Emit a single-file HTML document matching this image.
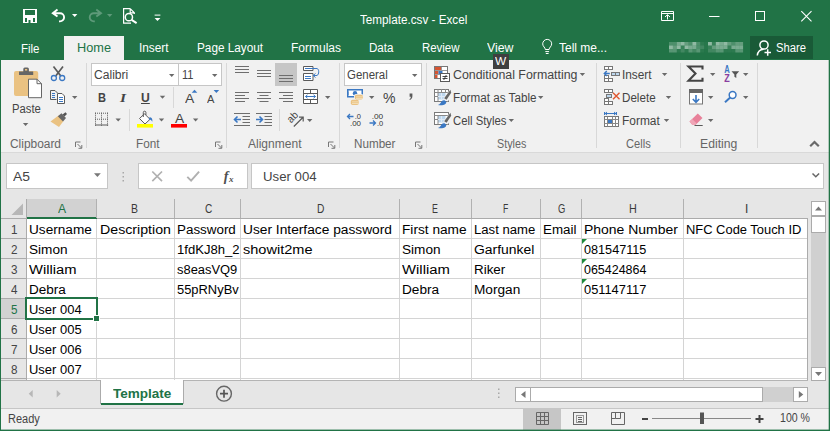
<!DOCTYPE html>
<html><head><meta charset="utf-8"><title>Template.csv - Excel</title>
<style>
html,body{margin:0;padding:0;}
body{width:830px;height:431px;overflow:hidden;position:relative;background:#e6e6e6;font-family:"Liberation Sans",sans-serif;}
.t{position:absolute;white-space:nowrap;transform-origin:0 50%;display:block;}
.b{position:absolute;box-sizing:border-box;}
svg{position:absolute;left:0;top:0;}

.g{background:#217346;}

</style></head><body>
<div class="b" style="left:0px;top:0px;width:830px;height:60px;background:#217346;"></div>
<div class="b" style="left:64px;top:36px;width:60px;height:24px;background:#f1f1f1;"></div>
<div class="b" style="left:750px;top:36px;width:63px;height:23px;background:#195a37;"></div>
<div class="b" style="left:0px;top:60px;width:830px;height:92px;background:#f1f1f1;"></div>
<div class="b" style="left:0px;top:152px;width:830px;height:1px;background:#d9d9d9;"></div>
<div class="b" style="left:86px;top:63px;width:1px;height:85px;background:#d8d8d8;"></div>
<div class="b" style="left:226px;top:63px;width:1px;height:85px;background:#d8d8d8;"></div>
<div class="b" style="left:339px;top:63px;width:1px;height:85px;background:#d8d8d8;"></div>
<div class="b" style="left:426px;top:63px;width:1px;height:85px;background:#d8d8d8;"></div>
<div class="b" style="left:596px;top:63px;width:1px;height:85px;background:#d8d8d8;"></div>
<div class="b" style="left:680px;top:63px;width:1px;height:85px;background:#d8d8d8;"></div>
<div class="b" style="left:757px;top:63px;width:1px;height:85px;background:#d8d8d8;"></div>
<div class="b" style="left:173px;top:87px;width:1px;height:21px;background:#d8d8d8;"></div>
<div class="b" style="left:129px;top:109px;width:1px;height:22px;background:#d8d8d8;"></div>
<div class="b" style="left:279px;top:109px;width:1px;height:22px;background:#d8d8d8;"></div>
<div class="b" style="left:91px;top:63px;width:88px;height:23px;background:#fff;border:1px solid #c6c6c6;"></div>
<div class="b" style="left:178px;top:63px;width:44px;height:23px;background:#fff;border:1px solid #c6c6c6;"></div>
<div class="b" style="left:344px;top:63px;width:78px;height:23px;background:#fff;border:1px solid #c6c6c6;"></div>
<div class="b" style="left:275px;top:63px;width:22px;height:23px;background:#c6c6c6;"></div>
<div class="b" style="left:493px;top:54px;width:16px;height:15px;background:#3f3f3f;"></div>
<div class="b" style="left:6px;top:163px;width:102px;height:26px;background:#fff;border:1px solid #c6c6c6;"></div>
<div class="b" style="left:138px;top:163px;width:110px;height:26px;background:#fff;border:1px solid #c6c6c6;"></div>
<div class="b" style="left:251px;top:163px;width:573px;height:26px;background:#fff;border:1px solid #c6c6c6;"></div>
<div class="b" style="left:27px;top:219px;width:780px;height:161px;background:#fff;"></div>
<div class="b" style="left:27px;top:199px;width:69px;height:18px;background:#d2d2d2;"></div>
<div class="b" style="left:26px;top:217px;width:71px;height:2px;background:#217346;"></div>
<div class="b" style="left:1px;top:299px;width:25px;height:19px;background:#d2d2d2;"></div>
<div class="b" style="left:97px;top:218px;width:711px;height:1px;background:#ababab;"></div>
<div class="b" style="left:1px;top:218px;width:25px;height:1px;background:#ababab;"></div>
<div class="b" style="left:26px;top:199px;width:1px;height:181px;background:#ababab;"></div>
<div class="b" style="left:96px;top:199px;width:1px;height:19px;background:#b1b1b1;"></div>
<div class="b" style="left:96px;top:219px;width:1px;height:161px;background:#d4d4d4;"></div>
<div class="b" style="left:174px;top:199px;width:1px;height:19px;background:#b1b1b1;"></div>
<div class="b" style="left:174px;top:219px;width:1px;height:161px;background:#d4d4d4;"></div>
<div class="b" style="left:240px;top:199px;width:1px;height:19px;background:#b1b1b1;"></div>
<div class="b" style="left:240px;top:219px;width:1px;height:161px;background:#d4d4d4;"></div>
<div class="b" style="left:399px;top:199px;width:1px;height:19px;background:#b1b1b1;"></div>
<div class="b" style="left:399px;top:219px;width:1px;height:161px;background:#d4d4d4;"></div>
<div class="b" style="left:471px;top:199px;width:1px;height:19px;background:#b1b1b1;"></div>
<div class="b" style="left:471px;top:219px;width:1px;height:161px;background:#d4d4d4;"></div>
<div class="b" style="left:540px;top:199px;width:1px;height:19px;background:#b1b1b1;"></div>
<div class="b" style="left:540px;top:219px;width:1px;height:161px;background:#d4d4d4;"></div>
<div class="b" style="left:581px;top:199px;width:1px;height:19px;background:#b1b1b1;"></div>
<div class="b" style="left:581px;top:219px;width:1px;height:161px;background:#d4d4d4;"></div>
<div class="b" style="left:683px;top:199px;width:1px;height:19px;background:#b1b1b1;"></div>
<div class="b" style="left:683px;top:219px;width:1px;height:161px;background:#d4d4d4;"></div>
<div class="b" style="left:807px;top:218px;width:1px;height:162px;background:#ababab;"></div>
<div class="b" style="left:27px;top:238px;width:780px;height:1px;background:#d4d4d4;"></div>
<div class="b" style="left:1px;top:238px;width:25px;height:1px;background:#ababab;"></div>
<div class="b" style="left:27px;top:258px;width:780px;height:1px;background:#d4d4d4;"></div>
<div class="b" style="left:1px;top:258px;width:25px;height:1px;background:#ababab;"></div>
<div class="b" style="left:27px;top:278px;width:780px;height:1px;background:#d4d4d4;"></div>
<div class="b" style="left:1px;top:278px;width:25px;height:1px;background:#ababab;"></div>
<div class="b" style="left:27px;top:298px;width:780px;height:1px;background:#d4d4d4;"></div>
<div class="b" style="left:1px;top:298px;width:25px;height:1px;background:#ababab;"></div>
<div class="b" style="left:27px;top:318px;width:780px;height:1px;background:#d4d4d4;"></div>
<div class="b" style="left:1px;top:318px;width:25px;height:1px;background:#ababab;"></div>
<div class="b" style="left:27px;top:338px;width:780px;height:1px;background:#d4d4d4;"></div>
<div class="b" style="left:1px;top:338px;width:25px;height:1px;background:#ababab;"></div>
<div class="b" style="left:27px;top:358px;width:780px;height:1px;background:#d4d4d4;"></div>
<div class="b" style="left:1px;top:358px;width:25px;height:1px;background:#ababab;"></div>
<div class="b" style="left:27px;top:378px;width:780px;height:1px;background:#d4d4d4;"></div>
<div class="b" style="left:1px;top:378px;width:25px;height:1px;background:#ababab;"></div>
<div class="b" style="left:1px;top:380px;width:807px;height:1px;background:#b4b4b4;"></div>
<div class="b" style="left:25px;top:297px;width:73px;height:23px;border:2px solid #217346;"></div>
<div class="b" style="left:93px;top:315px;width:7px;height:7px;background:#fff;"></div>
<div class="b" style="left:94px;top:316px;width:5px;height:5px;background:#217346;"></div>
<div class="b" style="left:811px;top:215px;width:15px;height:152px;background:#d0d0d0;"></div>
<div class="b" style="left:811px;top:201px;width:15px;height:15px;background:#fff;border:1px solid #ababab;"></div>
<div class="b" style="left:811px;top:216px;width:15px;height:17px;background:#fff;border:1px solid #ababab;"></div>
<div class="b" style="left:811px;top:367px;width:15px;height:14px;background:#fff;border:1px solid #ababab;"></div>
<div class="b" style="left:101px;top:380px;width:82px;height:23px;background:#fff;"></div>
<div class="b" style="left:101px;top:403px;width:82px;height:2px;background:#217346;"></div>
<div class="b" style="left:100px;top:380px;width:1px;height:24px;background:#ababab;"></div>
<div class="b" style="left:183px;top:380px;width:1px;height:24px;background:#ababab;"></div>
<div class="b" style="left:515px;top:387px;width:16px;height:15px;background:#fff;border:1px solid #ababab;"></div>
<div class="b" style="left:762px;top:387px;width:32px;height:15px;background:#d0d0d0;"></div>
<div class="b" style="left:530px;top:387px;width:233px;height:15px;background:#fff;border:1px solid #ababab;"></div>
<div class="b" style="left:793px;top:387px;width:15px;height:15px;background:#fff;border:1px solid #ababab;"></div>
<div class="b" style="left:1px;top:408px;width:828px;height:1px;background:#c6c6c6;"></div>
<div class="b" style="left:1px;top:409px;width:828px;height:21px;background:#f1f1f1;"></div>
<div class="b" style="left:523px;top:409px;width:38px;height:21px;background:#c6c6c6;"></div>
<div class="b" style="left:0px;top:0px;width:1px;height:431px;background:#217346;"></div>
<div class="b" style="left:828px;top:0px;width:2px;height:431px;background:rgba(33,115,70,0.3);"></div>
<div class="b" style="left:829px;top:0px;width:1px;height:431px;background:#217346;"></div>
<div class="b" style="left:0px;top:429px;width:830px;height:2px;background:rgba(33,115,70,0.4);"></div>
<div class="b" style="left:0px;top:430px;width:830px;height:1px;background:#217346;"></div>
<svg width="830" height="431" viewBox="0 0 830 431">
<rect x="23" y="9" width="14" height="14" fill="#fff"/>
<rect x="25" y="10" width="10" height="5" fill="#217346"/>
<rect x="25" y="18" width="2" height="4" fill="#217346"/><rect x="33" y="18" width="2" height="4" fill="#217346"/><rect x="28.5" y="20" width="2" height="3" fill="#217346"/>
<path d="M57.5 9.6L52.8 13.2L57.5 16.6M53.5 13.2H60a4.1 4.1 0 0 1 0 8.2H59" fill="none" stroke="#fff" stroke-width="1.9" stroke-linejoin="miter"/>
<path d="M72 14h5.4l-2.7 3z" fill="#fff"/>
<path d="M96.3 9.6L101 13.2L96.3 16.6M100.3 13.2H93.8a4.1 4.1 0 0 0 0 8.2H94.8" fill="none" stroke="#5e9a7a" stroke-width="1.9"/>
<path d="M107 14h5.4l-2.7 3z" fill="#5e9a7a"/>
<path d="M130.2 8.7H123.6V23.1H131M130.2 8.7L134.3 12.8V14M130.2 8.7V12.8H134.3" fill="none" stroke="#fff" stroke-width="1.2"/>
<circle cx="128.9" cy="17.2" r="3.6" fill="#217346" stroke="#fff" stroke-width="1.5"/><path d="M131.6 19.9L136.6 23.2" stroke="#fff" stroke-width="2"/>
<rect x="154.6" y="14.6" width="5.800000000000011" height="1" fill="#fff"/>
<path d="M154.6 18h5.8l-2.9 3z" fill="#fff"/>
<path d="M661.5 11.5h12v9h-12zM661.5 13.5h12M667.5 19.5v-4.5M665 17l2.5-2.3l2.5 2.3" fill="none" stroke="#fff" stroke-width="1"/>
<rect x="709" y="16" width="10.5" height="1" fill="#fff"/>
<rect x="755.5" y="11.5" width="9" height="9" fill="none" stroke="#fff" stroke-width="1"/>
<path d="M801.3 11.2L811.5 21.4M811.5 11.2L801.3 21.4" stroke="#fff" stroke-width="1.1"/>
<path d="M545.3 49.5c0-2-2.6-3-2.6-5.6a4.5 4.5 0 0 1 9 0c0 2.600-2.600 3.600-2.600 5.600zM545.3 51.600h3.800M545.800 53.500h2.800" fill="none" stroke="#fff" stroke-width="1"/>
<circle cx="764" cy="45" r="4.1" fill="none" stroke="#fff" stroke-width="1.5"/><path d="M757.3 55.500c0.500-4 3.200-6 6.200-6.200" fill="none" stroke="#fff" stroke-width="1.500"/><path d="M764.500 52.500h6.500M767.700 49.300v6.500" stroke="#fff" stroke-width="1.500"/>
<rect x="669.0" y="42.0" width="3.9" height="3.5" fill="#fff" fill-opacity="0.2"/>
<rect x="669.0" y="45.5" width="3.9" height="3.5" fill="#fff" fill-opacity="0.5"/>
<rect x="669.0" y="49.0" width="3.9" height="3.5" fill="#fff" fill-opacity="0.25"/>
<rect x="672.9" y="42.0" width="3.9" height="3.5" fill="#fff" fill-opacity="0.2"/>
<rect x="672.9" y="45.5" width="3.9" height="3.5" fill="#fff" fill-opacity="0.3"/>
<rect x="672.9" y="49.0" width="3.9" height="3.5" fill="#fff" fill-opacity="0.25"/>
<rect x="676.8" y="42.0" width="3.9" height="3.5" fill="#fff" fill-opacity="0.4"/>
<rect x="676.8" y="45.5" width="3.9" height="3.5" fill="#fff" fill-opacity="0.5"/>
<rect x="676.8" y="49.0" width="3.9" height="3.5" fill="#fff" fill-opacity="0.05"/>
<rect x="680.7" y="42.0" width="3.9" height="3.5" fill="#fff" fill-opacity="0.5"/>
<rect x="680.7" y="45.5" width="3.9" height="3.5" fill="#fff" fill-opacity="0.1"/>
<rect x="680.7" y="49.0" width="3.9" height="3.5" fill="#fff" fill-opacity="0.15"/>
<rect x="684.6" y="42.0" width="3.9" height="3.5" fill="#fff" fill-opacity="0.3"/>
<rect x="684.6" y="45.5" width="3.9" height="3.5" fill="#fff" fill-opacity="0.5"/>
<rect x="684.6" y="49.0" width="3.9" height="3.5" fill="#fff" fill-opacity="0.05"/>
<rect x="688.5" y="42.0" width="3.9" height="3.5" fill="#fff" fill-opacity="0.2"/>
<rect x="688.5" y="45.5" width="3.9" height="3.5" fill="#fff" fill-opacity="0.4"/>
<rect x="688.5" y="49.0" width="3.9" height="3.5" fill="#fff" fill-opacity="0.25"/>
<rect x="692.4" y="42.0" width="3.9" height="3.5" fill="#fff" fill-opacity="0.5"/>
<rect x="692.4" y="45.5" width="3.9" height="3.5" fill="#fff" fill-opacity="0.4"/>
<rect x="692.4" y="49.0" width="3.9" height="3.5" fill="#fff" fill-opacity="0.15"/>
<rect x="696.3" y="42.0" width="3.9" height="3.5" fill="#fff" fill-opacity="0.2"/>
<rect x="696.3" y="45.5" width="3.9" height="3.5" fill="#fff" fill-opacity="0.2"/>
<rect x="696.3" y="49.0" width="3.9" height="3.5" fill="#fff" fill-opacity="0.25"/>
<rect x="700.2" y="42.0" width="3.9" height="3.5" fill="#fff" fill-opacity="0.06"/>
<rect x="700.2" y="45.5" width="3.9" height="3.5" fill="#fff" fill-opacity="0.15"/>
<rect x="700.2" y="49.0" width="3.9" height="3.5" fill="#fff" fill-opacity="0.045"/>
<rect x="704.1" y="42.0" width="3.9" height="3.5" fill="#fff" fill-opacity="0.03"/>
<rect x="704.1" y="45.5" width="3.9" height="3.5" fill="#fff" fill-opacity="0.03"/>
<rect x="704.1" y="49.0" width="3.9" height="3.5" fill="#fff" fill-opacity="0.015"/>
<rect x="708.0" y="42.0" width="3.9" height="3.5" fill="#fff" fill-opacity="0.5"/>
<rect x="708.0" y="45.5" width="3.9" height="3.5" fill="#fff" fill-opacity="0.1"/>
<rect x="708.0" y="49.0" width="3.9" height="3.5" fill="#fff" fill-opacity="0.15"/>
<rect x="711.9" y="42.0" width="3.9" height="3.5" fill="#fff" fill-opacity="0.1"/>
<rect x="711.9" y="45.5" width="3.9" height="3.5" fill="#fff" fill-opacity="0.3"/>
<rect x="711.9" y="49.0" width="3.9" height="3.5" fill="#fff" fill-opacity="0.15"/>
<rect x="715.8" y="42.0" width="3.9" height="3.5" fill="#fff" fill-opacity="0.5"/>
<rect x="715.8" y="45.5" width="3.9" height="3.5" fill="#fff" fill-opacity="0.4"/>
<rect x="715.8" y="49.0" width="3.9" height="3.5" fill="#fff" fill-opacity="0.25"/>
<rect x="719.7" y="42.0" width="3.9" height="3.5" fill="#fff" fill-opacity="0.4"/>
<rect x="719.7" y="45.5" width="3.9" height="3.5" fill="#fff" fill-opacity="0.4"/>
<rect x="719.7" y="49.0" width="3.9" height="3.5" fill="#fff" fill-opacity="0.25"/>
<rect x="723.6" y="42.0" width="3.9" height="3.5" fill="#fff" fill-opacity="0.5"/>
<rect x="723.6" y="45.5" width="3.9" height="3.5" fill="#fff" fill-opacity="0.4"/>
<rect x="723.6" y="49.0" width="3.9" height="3.5" fill="#fff" fill-opacity="0.05"/>
<rect x="727.5" y="42.0" width="3.9" height="3.5" fill="#fff" fill-opacity="0.3"/>
<rect x="727.5" y="45.5" width="3.9" height="3.5" fill="#fff" fill-opacity="0.1"/>
<rect x="727.5" y="49.0" width="3.9" height="3.5" fill="#fff" fill-opacity="0.05"/>
<rect x="731.4" y="42.0" width="3.9" height="3.5" fill="#fff" fill-opacity="0.2"/>
<rect x="731.4" y="45.5" width="3.9" height="3.5" fill="#fff" fill-opacity="0.4"/>
<rect x="731.4" y="49.0" width="3.9" height="3.5" fill="#fff" fill-opacity="0.05"/>
<rect x="735.3" y="42.0" width="3.9" height="3.5" fill="#fff" fill-opacity="0.3"/>
<rect x="735.3" y="45.5" width="3.9" height="3.5" fill="#fff" fill-opacity="0.4"/>
<rect x="735.3" y="49.0" width="3.9" height="3.5" fill="#fff" fill-opacity="0.25"/>
<rect x="739.2" y="42.0" width="3.9" height="3.5" fill="#fff" fill-opacity="0.3"/>
<rect x="739.2" y="45.5" width="3.9" height="3.5" fill="#fff" fill-opacity="0.4"/>
<rect x="739.2" y="49.0" width="3.9" height="3.5" fill="#fff" fill-opacity="0.25"/>
<rect x="14" y="71" width="24.200" height="25" rx="2" fill="#eac282"/>
<path d="M19 75v-3.500h4.300v-2.500a1.500 1.500 0 0 1 1.500-1.500h2.600a1.500 1.500 0 0 1 1.500 1.500v2.500h4.300v3.500z" fill="#666"/><rect x="25" y="69" width="2.200" height="1.600" fill="#eac282"/>
<path d="M28.500 79.200h8.500l4.500 4.500v14h-13z" fill="#fff" stroke="#666" stroke-width="1"/><path d="M37 79.200v4.500h4.500" fill="none" stroke="#666" stroke-width="1"/>
<path d="M22.9 123h5.4l-2.7 3z" fill="#6a6a6a"/>
<path d="M53.500 66.500L60.800 76M63 66.500L55.700 76" stroke="#5a5a5a" stroke-width="1.700" fill="none"/>
<circle cx="53.900" cy="78" r="2.500" fill="none" stroke="#3b78c3" stroke-width="1.300"/><circle cx="62.200" cy="78" r="2.500" fill="none" stroke="#3b78c3" stroke-width="1.300"/>
<path d="M56.500 99.500h-6v-9h4.500l2.500 2.500" fill="none" stroke="#5a5a5a" stroke-width="1"/><path d="M57.500 93.500h4.500l2.500 2.500v7.500h-7z" fill="#fff" stroke="#5a5a5a" stroke-width="1"/>
<rect x="52" y="93" width="3" height="1" fill="#3b78c3"/>
<rect x="52" y="95" width="3" height="1" fill="#3b78c3"/>
<rect x="52" y="97" width="3" height="1" fill="#3b78c3"/>
<rect x="59" y="97" width="4" height="1" fill="#3b78c3"/>
<rect x="59" y="99" width="4" height="1" fill="#3b78c3"/>
<rect x="59" y="101" width="4" height="1" fill="#3b78c3"/>
<path d="M72 96h5.4l-2.7 3z" fill="#6a6a6a"/>
<path d="M50.500 121.500l8-6l5 5.500l-4.500 6z" fill="#eac282"/><path d="M57.800 116.200l3.700-3l4.500 4.800l-3 3.600z" fill="#666"/><path d="M62.500 114.500l3-2.200l1.500 1.600l-2.500 2.600z" fill="#555"/>
<path d="M75.5 147.0v-5h5" fill="none" stroke="#777" stroke-width="1"/><path d="M77.5 144.0l4 4M81.8 145.0v3.300h-3.300" fill="none" stroke="#777" stroke-width="1"/>
<path d="M215.5 147.0v-5h5" fill="none" stroke="#777" stroke-width="1"/><path d="M217.5 144.0l4 4M221.8 145.0v3.300h-3.300" fill="none" stroke="#777" stroke-width="1"/>
<path d="M328.5 147.0v-5h5" fill="none" stroke="#777" stroke-width="1"/><path d="M330.5 144.0l4 4M334.8 145.0v3.300h-3.300" fill="none" stroke="#777" stroke-width="1"/>
<path d="M415.5 147.0v-5h5" fill="none" stroke="#777" stroke-width="1"/><path d="M417.5 144.0l4 4M421.8 145.0v3.300h-3.300" fill="none" stroke="#777" stroke-width="1"/>
<path d="M169 74h5.4l-2.7 3z" fill="#6a6a6a"/>
<path d="M212 74h5.4l-2.7 3z" fill="#6a6a6a"/>
<path d="M159.8 95.8h5.4l-2.7 3z" fill="#6a6a6a"/>
<path d="M191.700 92.800h5.600l-2.800-3z" fill="#3b78c3"/><path d="M213.600 89.900h5.600l-2.800 3z" fill="#3b78c3"/>
<rect x="95" y="112.7" width="1" height="1" fill="#5c5c5c"/>
<rect x="101" y="112.7" width="1" height="1" fill="#5c5c5c"/>
<rect x="107" y="112.7" width="1" height="1" fill="#5c5c5c"/>
<rect x="95" y="114.7" width="1" height="1" fill="#5c5c5c"/>
<rect x="101" y="114.7" width="1" height="1" fill="#5c5c5c"/>
<rect x="107" y="114.7" width="1" height="1" fill="#5c5c5c"/>
<rect x="95" y="116.7" width="1" height="1" fill="#5c5c5c"/>
<rect x="101" y="116.7" width="1" height="1" fill="#5c5c5c"/>
<rect x="107" y="116.7" width="1" height="1" fill="#5c5c5c"/>
<rect x="95" y="118.7" width="1" height="1" fill="#5c5c5c"/>
<rect x="101" y="118.7" width="1" height="1" fill="#5c5c5c"/>
<rect x="107" y="118.7" width="1" height="1" fill="#5c5c5c"/>
<rect x="95" y="120.7" width="1" height="1" fill="#5c5c5c"/>
<rect x="101" y="120.7" width="1" height="1" fill="#5c5c5c"/>
<rect x="107" y="120.7" width="1" height="1" fill="#5c5c5c"/>
<rect x="95" y="122.7" width="1" height="1" fill="#5c5c5c"/>
<rect x="101" y="122.7" width="1" height="1" fill="#5c5c5c"/>
<rect x="107" y="122.7" width="1" height="1" fill="#5c5c5c"/>
<rect x="95" y="124.7" width="1" height="1" fill="#5c5c5c"/>
<rect x="101" y="124.7" width="1" height="1" fill="#5c5c5c"/>
<rect x="107" y="124.7" width="1" height="1" fill="#5c5c5c"/>
<rect x="95" y="112.7" width="1" height="1" fill="#5c5c5c"/>
<rect x="95" y="118.7" width="1" height="1" fill="#5c5c5c"/>
<rect x="97" y="112.7" width="1" height="1" fill="#5c5c5c"/>
<rect x="97" y="118.7" width="1" height="1" fill="#5c5c5c"/>
<rect x="99" y="112.7" width="1" height="1" fill="#5c5c5c"/>
<rect x="99" y="118.7" width="1" height="1" fill="#5c5c5c"/>
<rect x="101" y="112.7" width="1" height="1" fill="#5c5c5c"/>
<rect x="101" y="118.7" width="1" height="1" fill="#5c5c5c"/>
<rect x="103" y="112.7" width="1" height="1" fill="#5c5c5c"/>
<rect x="103" y="118.7" width="1" height="1" fill="#5c5c5c"/>
<rect x="105" y="112.7" width="1" height="1" fill="#5c5c5c"/>
<rect x="105" y="118.7" width="1" height="1" fill="#5c5c5c"/>
<rect x="107" y="112.7" width="1" height="1" fill="#5c5c5c"/>
<rect x="107" y="118.7" width="1" height="1" fill="#5c5c5c"/>
<rect x="95" y="124.5" width="13.200000000000003" height="1" fill="#5a5a5a"/>
<path d="M115.5 118.6h5.4l-2.7 3z" fill="#6a6a6a"/>
<path d="M144.500 113.800l5.500 5.500l-5 4.700l-5.500-5.500z" fill="#fff" stroke="#5a5a5a" stroke-width="1"/><path d="M143.300 117v-4.500a1.300 1.300 0 0 1 2.600 0v2.500" fill="none" stroke="#5a5a5a" stroke-width="1"/><path d="M149.500 117.200c2.300 0 3.300 1.800 2.800 4.500c-.8-1.700-1.800-2.300-3.600-2.300z" fill="#3b78c3"/>
<rect x="137" y="124" width="16" height="3.600" fill="#ffff00"/>
<path d="M158.8 118.6h5.4l-2.7 3z" fill="#6a6a6a"/>
<rect x="171" y="124" width="16" height="3.600" fill="#f00"/>
<path d="M192.9 118.6h5.4l-2.7 3z" fill="#6a6a6a"/>
<rect x="235" y="66" width="14" height="1" fill="#6e6e6e"/>
<rect x="235" y="69" width="14" height="1" fill="#6e6e6e"/>
<rect x="235" y="72" width="14" height="1" fill="#6e6e6e"/>
<rect x="257" y="70" width="14" height="1" fill="#6e6e6e"/>
<rect x="257" y="73" width="14" height="1" fill="#6e6e6e"/>
<rect x="257" y="76" width="14" height="1" fill="#6e6e6e"/>
<rect x="279" y="75" width="14" height="1" fill="#6e6e6e"/>
<rect x="279" y="78" width="14" height="1" fill="#6e6e6e"/>
<rect x="279" y="81" width="14" height="1" fill="#6e6e6e"/>
<rect x="235" y="92" width="14" height="1" fill="#6e6e6e"/>
<rect x="257" y="92" width="14" height="1" fill="#6e6e6e"/>
<rect x="279" y="92" width="14" height="1" fill="#6e6e6e"/>
<rect x="235" y="95" width="10" height="1" fill="#6e6e6e"/>
<rect x="259.5" y="95" width="9.0" height="1" fill="#6e6e6e"/>
<rect x="283" y="95" width="10" height="1" fill="#6e6e6e"/>
<rect x="235" y="98" width="14" height="1" fill="#6e6e6e"/>
<rect x="257" y="98" width="14" height="1" fill="#6e6e6e"/>
<rect x="279" y="98" width="14" height="1" fill="#6e6e6e"/>
<rect x="235" y="101" width="10" height="1" fill="#6e6e6e"/>
<rect x="259.5" y="101" width="9.0" height="1" fill="#6e6e6e"/>
<rect x="283" y="101" width="10" height="1" fill="#6e6e6e"/>
<path d="M303.500 66.500h9.500v4h-9.500zM303.500 73.500h9.500v7h-9.500z" fill="#fff" stroke="#5a5a5a" stroke-width="1"/>
<rect x="305" y="68" width="12" height="1" fill="#3b78c3"/>
<rect x="305" y="76" width="6" height="1" fill="#3b78c3"/>
<rect x="305" y="78" width="6" height="1" fill="#3b78c3"/>
<path d="M317 68.500c2.300.5 2.300 6 0 7h-3.500M315.500 73.500l-2.300 2l2.300 2" fill="none" stroke="#3b78c3" stroke-width="1"/>
<path d="M303.500 89.500h14v14h-14zM303.500 93.500h14M303.500 99.500h14M310.500 89.500v4M310.500 99.500v4" fill="#fff" stroke="#5a5a5a" stroke-width="1"/>
<path d="M305.500 96.500h10M307.500 94.800l-2 1.700l2 1.700M313.500 94.800l2 1.700l-2 1.700" fill="none" stroke="#3b78c3" stroke-width="1"/>
<path d="M325 96h5.4l-2.7 3z" fill="#6a6a6a"/>
<rect x="234" y="113" width="16" height="1" fill="#6e6e6e"/>
<rect x="256" y="113" width="16" height="1" fill="#6e6e6e"/>
<rect x="242.5" y="116" width="7.5" height="1" fill="#6e6e6e"/>
<rect x="264.5" y="116" width="7.5" height="1" fill="#6e6e6e"/>
<rect x="242.5" y="119" width="7.5" height="1" fill="#6e6e6e"/>
<rect x="264.5" y="119" width="7.5" height="1" fill="#6e6e6e"/>
<rect x="242.5" y="122" width="7.5" height="1" fill="#6e6e6e"/>
<rect x="264.5" y="122" width="7.5" height="1" fill="#6e6e6e"/>
<rect x="234" y="125" width="16" height="1" fill="#6e6e6e"/>
<rect x="256" y="125" width="16" height="1" fill="#6e6e6e"/>
<path d="M234.500 119.500h6.500M237.500 116.500l-3 3l3 3" fill="none" stroke="#3b78c3" stroke-width="1.600"/>
<path d="M256 119.500h6.500M259.500 116.500l3 3l-3 3" fill="none" stroke="#3b78c3" stroke-width="1.600"/>
<path d="M293.800 126.500l9-9M299 117.200h4.200v4.200" fill="none" stroke="#5a5a5a" stroke-width="1.200"/>
<path d="M307 119h5.4l-2.7 3z" fill="#6a6a6a"/>
<path d="M412 74h5.4l-2.7 3z" fill="#6a6a6a"/>
<rect x="347" y="89" width="16" height="8.500" fill="#3b78c3"/><rect x="348.500" y="90.500" width="13" height="5.500" fill="#fff"/><circle cx="355" cy="93.200" r="2.200" fill="#3b78c3"/><rect x="347" y="91.500" width="1.500" height="3.500" fill="#3b78c3"/>
<rect x="354" y="94" width="9.500" height="6" rx="2" fill="#f1f1f1"/><rect x="350" y="99" width="9" height="6.500" rx="2" fill="#f1f1f1"/><rect x="354.800" y="94.800" width="8.200" height="4.800" rx="1.800" fill="#eac282"/><rect x="350.800" y="99.800" width="8" height="5.200" rx="1.800" fill="#eac282"/>
<rect x="356" y="96.5" width="7" height="0.8" fill="#f6e3c0"/>
<rect x="356" y="98" width="7" height="0.8" fill="#f6e3c0"/>
<rect x="352" y="101.5" width="6.800000000000011" height="0.8" fill="#f6e3c0"/>
<rect x="352" y="103.2" width="6.800000000000011" height="0.8" fill="#f6e3c0"/>
<path d="M369 96h5.4l-2.7 3z" fill="#6a6a6a"/>
<path d="M409.600 93.500h2.800v2.500c0 2-1 3.500-2.800 4v-1c.8-.4 1.200-1.200 1.200-2.300h-1.200z" fill="#5a5a5a"/>
<path d="M347.500 116.500h6M350 114l-2.500 2.500l2.500 2.500" fill="none" stroke="#3b78c3" stroke-width="1.300"/>
<path d="M369.500 123h6M373 120.500l2.500 2.500l-2.500 2.500" fill="none" stroke="#3b78c3" stroke-width="1.300"/>
<rect x="434.500" y="66.500" width="13" height="12" fill="#fff" stroke="#777" stroke-width="1"/>
<rect x="435" y="67" width="6" height="3" fill="#d65532"/><rect x="435" y="71" width="3.500" height="3" fill="#d65532"/><rect x="438.500" y="71" width="4" height="3" fill="#3b78c3"/><rect x="435" y="75" width="2.500" height="3" fill="#d65532"/>
<rect x="441" y="67" width="1" height="3" fill="#999"/>
<rect x="435" y="70" width="12" height="1" fill="#999"/>
<rect x="435" y="74" width="6" height="1" fill="#999"/>
<rect x="440.500" y="73.500" width="9" height="8" fill="#fff" stroke="#5a5a5a" stroke-width="1"/><path d="M442.500 76.500h5M442.500 78.500h5M446.300 75l-2.600 5" stroke="#333" stroke-width=".9"/>
<path d="M579.7 73h5.4l-2.7 3z" fill="#6a6a6a"/>
<rect x="434.500" y="89.5" width="14" height="12" fill="#fff" stroke="#7a7a7a" stroke-width="1"/><rect x="438" y="93" width="7.500" height="6.500" fill="#bdd7ee"/>
<path d="M434.500 92.5h14M434.500 96.5h3.500M438 89v12.5" stroke="#8a8a8a" stroke-width="1" fill="none"/>
<path d="M441.500 89v3.500M445.500 89v3.500" stroke="#8a8a8a" stroke-width="1" fill="none"/>
<path d="M441.500 93v6.500M438 96.5h7.500" stroke="#dfeaf6" stroke-width="1" fill="none"/>
<path d="M451.300 88l-8 10.500l4.500 3l5-8z" fill="#f1f1f1"/><path d="M450.400 89.8l.8 3l-4.600 7l-2.400-1.500z" fill="#666"/>
<path d="M437.800 105c2.200-.4 2.800-2.200 3.800-3.700c1.300-1.800 4.200-1.400 4.600.8c.4 2.200-2.900 3.900-8.400 2.900z" fill="#3b78c3"/>
<rect x="434.500" y="112.5" width="14" height="12" fill="#fff" stroke="#7a7a7a" stroke-width="1"/><rect x="438" y="116" width="7.500" height="6.500" fill="#bdd7ee"/>
<path d="M434.500 115.5h14M434.500 119.5h3.500M438 115.5v9" stroke="#8a8a8a" stroke-width="1" fill="none"/>
<path d="M441.500 116v6.500M438 119.5h7.500" stroke="#dfeaf6" stroke-width="1" fill="none"/>
<path d="M451.300 111l-8 10.500l4.500 3l5-8z" fill="#f1f1f1"/><path d="M450.400 112.8l.8 3l-4.600 7l-2.400-1.500z" fill="#666"/>
<path d="M437.800 128c2.200-.4 2.800-2.200 3.800-3.700c1.300-1.800 4.200-1.400 4.600.8c.4 2.200-2.900 3.900-8.400 2.900z" fill="#3b78c3"/>
<path d="M538 96h5.4l-2.7 3z" fill="#6a6a6a"/>
<path d="M508.6 119h5.4l-2.7 3z" fill="#6a6a6a"/>
<rect x="604.5" y="66.5" width="4" height="3" fill="#fff" stroke="#777" stroke-width="1"/>
<rect x="608.5" y="66.5" width="4" height="3" fill="#fff" stroke="#777" stroke-width="1"/>
<rect x="611.5" y="72.5" width="4" height="3" fill="#bdd7ee" stroke="#777" stroke-width="1"/>
<rect x="615.5" y="72.5" width="4" height="3" fill="#bdd7ee" stroke="#777" stroke-width="1"/>
<rect x="604.5" y="78.5" width="4" height="3" fill="#fff" stroke="#777" stroke-width="1"/>
<rect x="608.5" y="78.5" width="4" height="3" fill="#fff" stroke="#777" stroke-width="1"/>
<rect x="604.5" y="75.5" width="4" height="3" fill="#fff" stroke="#777" stroke-width="1"/>
<path d="M604.300 73.500h5.500M606.800 71l-2.500 2.500l2.500 2.500" fill="none" stroke="#3b78c3" stroke-width="1.400"/>
<path d="M661.9 73h5.4l-2.7 3z" fill="#6a6a6a"/>
<rect x="604.5" y="89.5" width="4" height="3" fill="#fff" stroke="#777" stroke-width="1"/>
<rect x="608.5" y="89.5" width="4" height="3" fill="#fff" stroke="#777" stroke-width="1"/>
<rect x="606.5" y="94.5" width="5" height="3" fill="#bdd7ee" stroke="#777" stroke-width="1"/>
<rect x="604.5" y="98.5" width="4" height="3" fill="#fff" stroke="#777" stroke-width="1"/>
<rect x="604.5" y="101.5" width="4" height="3" fill="#fff" stroke="#777" stroke-width="1"/>
<rect x="608.5" y="101.5" width="4" height="3" fill="#fff" stroke="#777" stroke-width="1"/>
<path d="M613 92.800l6.500 6.500M619.500 92.800l-6.500 6.500" stroke="#e0562f" stroke-width="1.400"/>
<path d="M665.8 96h5.4l-2.7 3z" fill="#6a6a6a"/>
<path d="M604.500 112v3M616.500 112v3M605 113.500h11M607 112l-1.800 1.500l1.800 1.500M614 112l1.800 1.500l-1.800 1.500" fill="none" stroke="#3b78c3" stroke-width="1"/>
<rect x="604.500" y="116.500" width="14" height="10" fill="#fff" stroke="#777"/><path d="M604.500 119.500h14M604.500 123.500h14M607.500 116.500v10M612.500 116.500v10M615.500 116.500v10" stroke="#888" fill="none"/><rect x="608" y="120" width="4" height="3" fill="#3b78c3"/>
<path d="M663.8 119h5.4l-2.7 3z" fill="#6a6a6a"/>
<path d="M702.500 69.500v-3h-14l7 7l-7 7.300h14v-3" fill="none" stroke="#444" stroke-width="2.100"/>
<path d="M710 73h5.4l-2.7 3z" fill="#6a6a6a"/>
<path d="M743 73h5.4l-2.7 3z" fill="#6a6a6a"/>
<path d="M731.500 71.300h7.700l-2.900 3.200v3.500l-1.900-1.200v-2.300z" fill="#555"/>
<rect x="689.500" y="89.500" width="13" height="14.500" fill="#fff" stroke="#777"/><rect x="689" y="89" width="14" height="4" fill="#666"/><path d="M696 95v7M692.800 99l3.200 3.300l3.200-3.300" fill="none" stroke="#3b78c3" stroke-width="1.600"/>
<path d="M708 96h5.4l-2.7 3z" fill="#6a6a6a"/>
<circle cx="732.600" cy="95" r="3.400" fill="#fff" stroke="#3b78c3" stroke-width="1.500"/><path d="M730.200 97.600l-5.200 4.600" stroke="#3b78c3" stroke-width="2"/>
<path d="M743 96h5.4l-2.7 3z" fill="#6a6a6a"/>
<path d="M689.500 121.500l8.300-8l4.700 4.600l-7 7h-3z" fill="#e8819a"/><path d="M689.500 121.500l2.700-2.600l4.500 4.500l-1.700 1.700h-2.700z" fill="#f0a5b6"/>
<rect x="694.5" y="125" width="8.200000000000045" height="1" fill="#5a5a5a"/>
<path d="M708 119h5.4l-2.7 3z" fill="#6a6a6a"/>
<path d="M810.200 146.300l4.300-4.300l4.300 4.300" fill="none" stroke="#6a6a6a" stroke-width="2.200"/>
<path d="M94 173.2h6.8l-3.4 3.7z" fill="#777"/>
<rect x="122.500" y="172" width="1.500" height="1.500" fill="#a8a8a8"/>
<rect x="122.500" y="176" width="1.500" height="1.500" fill="#a8a8a8"/>
<rect x="122.500" y="180" width="1.500" height="1.500" fill="#a8a8a8"/>
<path d="M152.300 171.500l9.700 9.700M162 171.500l-9.700 9.700" stroke="#b0b0b0" stroke-width="1.700"/>
<path d="M187.300 176.800l3.800 3.800l8-9" fill="none" stroke="#b0b0b0" stroke-width="1.900"/>
<path d="M812.500 173.500l3.300 3.300l3.300-3.300" fill="none" stroke="#666" stroke-width="1.500"/>
<path d="M23 203.500v11.500h-11.500z" fill="#b7b7b7"/>
<path d="M582 239h5l-5 5z" fill="#1e8a3c"/>
<path d="M582 259h5l-5 5z" fill="#1e8a3c"/>
<path d="M582 279h5l-5 5z" fill="#1e8a3c"/>
<path d="M815 210.500h7l-3.500-4z" fill="#777"/><path d="M815 372h7l-3.500 4z" fill="#777"/>
<path d="M525.500 391v7l-4.500-3.500z" fill="#777"/><path d="M798.800 391v7l4.500-3.500z" fill="#777"/>
<rect x="498" y="388.5" width="1.500" height="1.500" fill="#a8a8a8"/>
<rect x="498" y="392.5" width="1.500" height="1.500" fill="#a8a8a8"/>
<rect x="498" y="396.5" width="1.500" height="1.500" fill="#a8a8a8"/>
<path d="M32.700 390v7.500l-4-3.750z" fill="#b7b7b7"/><path d="M56.700 390v7.500l4-3.750z" fill="#b7b7b7"/>
<circle cx="224" cy="393.700" r="7.400" fill="none" stroke="#666" stroke-width="1.400"/><path d="M220 393.700h8M224 389.700v8" stroke="#555" stroke-width="1.700"/>
<path d="M536.500 412.500h12v12h-12zM536.500 416.500h12M536.500 420.500h12M540.500 412.500v12M544.500 412.500v12" fill="none" stroke="#666" stroke-width="1"/>
<rect x="573.500" y="412.500" width="13" height="12" fill="none" stroke="#666"/><rect x="576.500" y="415.500" width="7" height="7" fill="none" stroke="#999"/><path d="M578 417.500h4M578 419.500h4M578 421.500h4" stroke="#666"/>
<path d="M611.500 412.500h13v12h-13zM615.500 412.500v6h5v-6M611.500 418.500h4" fill="none" stroke="#666"/>
<rect x="642" y="418" width="6" height="2" fill="#444"/>
<rect x="652" y="418" width="99" height="1" fill="#888"/>
<rect x="700" y="412.500" width="4" height="11.500" fill="#555"/>
<path d="M755.500 419h8M759.500 415v8" stroke="#444" stroke-width="2"/>
<text x="174.9" y="123" font-size="13" fill="#444" textLength="9.2" lengthAdjust="spacingAndGlyphs" font-family="Liberation Sans, sans-serif" >A</text>
<text x="724.3" y="73.4" font-size="10" fill="#3b78c3" textLength="5.5" lengthAdjust="spacingAndGlyphs" font-family="Liberation Sans, sans-serif" font-weight="bold">A</text>
<text x="724.3" y="82.3" font-size="10" fill="#8a3fa0" textLength="5.5" lengthAdjust="spacingAndGlyphs" font-family="Liberation Sans, sans-serif" font-weight="bold">Z</text>
<text x="354.8" y="118.8" font-size="8" fill="#333" textLength="6.2" lengthAdjust="spacingAndGlyphs" font-family="Liberation Sans, sans-serif" >.0</text>
<text x="350" y="125.8" font-size="8" fill="#333" textLength="11" lengthAdjust="spacingAndGlyphs" font-family="Liberation Sans, sans-serif" >.00</text>
<text x="371.7" y="118.8" font-size="8" fill="#333" textLength="11.5" lengthAdjust="spacingAndGlyphs" font-family="Liberation Sans, sans-serif" >.00</text>
<text x="377" y="125.8" font-size="8" fill="#333" textLength="6.2" lengthAdjust="spacingAndGlyphs" font-family="Liberation Sans, sans-serif" >.0</text>
<text x="0" y="0" font-size="10.5" fill="#444" textLength="11" lengthAdjust="spacingAndGlyphs" font-family="Liberation Sans, sans-serif" transform="translate(291 123.500) rotate(-45)">ab</text>
<text x="223.8" y="181" font-size="14" fill="#505050" font-style="italic" font-weight="bold" font-family="Liberation Serif, serif">f</text>
<text x="229" y="182" font-size="9" fill="#505050" font-style="italic" font-weight="bold" font-family="Liberation Serif, serif">x</text>
</svg>
<span class="t" style="left:360.00px;top:12.34px;font-size:12px;line-height:17px;color:#fff;font-family:'Liberation Sans', sans-serif;transform:scaleX(0.9750);">Template.csv - Excel</span>
<span class="t" style="left:21.00px;top:40.64px;font-size:12px;line-height:17px;color:#fff;font-family:'Liberation Sans', sans-serif;transform:scaleX(0.9564);">File</span>
<span class="t" style="left:77.00px;top:39.84px;font-size:12px;line-height:17px;color:#217346;font-family:'Liberation Sans', sans-serif;transform:scaleX(1.0620);">Home</span>
<span class="t" style="left:138.50px;top:39.84px;font-size:12px;line-height:17px;color:#fff;font-family:'Liberation Sans', sans-serif;transform:scaleX(0.9828);">Insert</span>
<span class="t" style="left:196.50px;top:39.84px;font-size:12px;line-height:17px;color:#fff;font-family:'Liberation Sans', sans-serif;transform:scaleX(0.9794);">Page Layout</span>
<span class="t" style="left:290.50px;top:39.84px;font-size:12px;line-height:17px;color:#fff;font-family:'Liberation Sans', sans-serif;transform:scaleX(0.9997);">Formulas</span>
<span class="t" style="left:368.50px;top:39.84px;font-size:12px;line-height:17px;color:#fff;font-family:'Liberation Sans', sans-serif;transform:scaleX(0.9661);">Data</span>
<span class="t" style="left:422.00px;top:39.84px;font-size:12px;line-height:17px;color:#fff;font-family:'Liberation Sans', sans-serif;transform:scaleX(0.9528);">Review</span>
<span class="t" style="left:487.00px;top:39.84px;font-size:12px;line-height:17px;color:#fff;font-family:'Liberation Sans', sans-serif;transform:scaleX(1.0273);">View</span>
<span class="t" style="left:558.50px;top:39.84px;font-size:12px;line-height:17px;color:#fff;font-family:'Liberation Sans', sans-serif;transform:scaleX(0.9997);">Tell me...</span>
<span class="t" style="left:775.50px;top:39.84px;font-size:12px;line-height:17px;color:#fff;font-family:'Liberation Sans', sans-serif;transform:scaleX(0.9366);">Share</span>
<span class="t" style="left:495.30px;top:54.19px;font-size:11px;line-height:15px;color:#fff;font-family:'Liberation Sans', sans-serif;transform:scaleX(1.0779);">W</span>
<span class="t" style="left:11.80px;top:101.34px;font-size:12px;line-height:17px;color:#444;font-family:'Liberation Sans', sans-serif;transform:scaleX(0.9385);">Paste</span>
<span class="t" style="left:9.90px;top:136.24px;font-size:12px;line-height:17px;color:#666;font-family:'Liberation Sans', sans-serif;transform:scaleX(0.9927);">Clipboard</span>
<span class="t" style="left:93.80px;top:67.34px;font-size:12px;line-height:17px;color:#444;font-family:'Liberation Sans', sans-serif;transform:scaleX(1.0084);">Calibri</span>
<span class="t" style="left:182.10px;top:67.34px;font-size:12px;line-height:17px;color:#444;font-family:'Liberation Sans', sans-serif;transform:scaleX(0.9223);">11</span>
<span class="t" style="left:97.50px;top:88.50px;font-size:13px;line-height:18px;color:#444;font-family:'Liberation Sans', sans-serif;font-weight:bold;transform:scaleX(0.8519);">B</span>
<span class="t" style="left:120.00px;top:88.50px;font-size:13px;line-height:18px;color:#444;font-family:'Liberation Serif', serif;font-weight:bold;font-style:italic;transform:scaleX(1.1852);">I</span>
<span class="t" style="left:141.00px;top:88.50px;font-size:13px;line-height:18px;color:#444;font-family:'Liberation Sans', sans-serif;font-weight:bold;transform:scaleX(0.9371);text-decoration:underline;">U</span>
<span class="t" style="left:184.50px;top:88.62px;font-size:13.5px;line-height:19px;color:#444;font-family:'Liberation Sans', sans-serif;transform:scaleX(1.0315);">A</span>
<span class="t" style="left:207.30px;top:91.66px;font-size:10.5px;line-height:15px;color:#444;font-family:'Liberation Sans', sans-serif;transform:scaleX(1.0548);">A</span>
<span class="t" style="left:136.30px;top:136.24px;font-size:12px;line-height:17px;color:#666;font-family:'Liberation Sans', sans-serif;transform:scaleX(0.9785);">Font</span>
<span class="t" style="left:247.80px;top:136.24px;font-size:12px;line-height:17px;color:#666;font-family:'Liberation Sans', sans-serif;transform:scaleX(1.0023);">Alignment</span>
<span class="t" style="left:346.80px;top:67.34px;font-size:12px;line-height:17px;color:#444;font-family:'Liberation Sans', sans-serif;transform:scaleX(0.9554);">General</span>
<span class="t" style="left:383.40px;top:87.30px;font-size:15px;line-height:21px;color:#444;font-family:'Liberation Sans', sans-serif;transform:scaleX(0.9368);">%</span>
<span class="t" style="left:353.90px;top:136.24px;font-size:12px;line-height:17px;color:#666;font-family:'Liberation Sans', sans-serif;transform:scaleX(0.9722);">Number</span>
<span class="t" style="left:452.50px;top:67.34px;font-size:12px;line-height:17px;color:#444;font-family:'Liberation Sans', sans-serif;transform:scaleX(1.0312);">Conditional Formatting</span>
<span class="t" style="left:452.50px;top:90.34px;font-size:12px;line-height:17px;color:#444;font-family:'Liberation Sans', sans-serif;transform:scaleX(0.9729);">Format as Table</span>
<span class="t" style="left:452.50px;top:113.34px;font-size:12px;line-height:17px;color:#444;font-family:'Liberation Sans', sans-serif;transform:scaleX(0.9438);">Cell Styles</span>
<span class="t" style="left:496.70px;top:136.24px;font-size:12px;line-height:17px;color:#666;font-family:'Liberation Sans', sans-serif;transform:scaleX(0.8964);">Styles</span>
<span class="t" style="left:622.30px;top:67.34px;font-size:12px;line-height:17px;color:#444;font-family:'Liberation Sans', sans-serif;transform:scaleX(0.9862);">Insert</span>
<span class="t" style="left:622.30px;top:90.34px;font-size:12px;line-height:17px;color:#444;font-family:'Liberation Sans', sans-serif;transform:scaleX(0.9686);">Delete</span>
<span class="t" style="left:622.30px;top:113.34px;font-size:12px;line-height:17px;color:#444;font-family:'Liberation Sans', sans-serif;transform:scaleX(0.9943);">Format</span>
<span class="t" style="left:625.80px;top:136.24px;font-size:12px;line-height:17px;color:#666;font-family:'Liberation Sans', sans-serif;transform:scaleX(0.9261);">Cells</span>
<span class="t" style="left:699.80px;top:136.24px;font-size:12px;line-height:17px;color:#666;font-family:'Liberation Sans', sans-serif;transform:scaleX(1.0163);">Editing</span>
<span class="t" style="left:12.60px;top:169.14px;font-size:12px;line-height:17px;color:#444;font-family:'Liberation Sans', sans-serif;transform:scaleX(1.1574);">A5</span>
<span class="t" style="left:263.10px;top:169.14px;font-size:12px;line-height:17px;color:#444;font-family:'Liberation Sans', sans-serif;transform:scaleX(1.1005);">User 004</span>
<span class="t" style="left:58.10px;top:201.14px;font-size:12px;line-height:17px;color:#217346;font-family:'Liberation Sans', sans-serif;transform:scaleX(1.0105);">A</span>
<span class="t" style="left:131.00px;top:201.14px;font-size:12px;line-height:17px;color:#3a3a3a;font-family:'Liberation Sans', sans-serif;transform:scaleX(0.8733);">B</span>
<span class="t" style="left:204.70px;top:201.14px;font-size:12px;line-height:17px;color:#3a3a3a;font-family:'Liberation Sans', sans-serif;transform:scaleX(0.8418);">C</span>
<span class="t" style="left:316.60px;top:201.14px;font-size:12px;line-height:17px;color:#3a3a3a;font-family:'Liberation Sans', sans-serif;transform:scaleX(0.8533);">D</span>
<span class="t" style="left:432.30px;top:201.14px;font-size:12px;line-height:17px;color:#3a3a3a;font-family:'Liberation Sans', sans-serif;transform:scaleX(0.7361);">E</span>
<span class="t" style="left:503.40px;top:201.14px;font-size:12px;line-height:17px;color:#3a3a3a;font-family:'Liberation Sans', sans-serif;transform:scaleX(0.7217);">F</span>
<span class="t" style="left:557.70px;top:201.14px;font-size:12px;line-height:17px;color:#3a3a3a;font-family:'Liberation Sans', sans-serif;transform:scaleX(0.7813);">G</span>
<span class="t" style="left:628.60px;top:201.14px;font-size:12px;line-height:17px;color:#3a3a3a;font-family:'Liberation Sans', sans-serif;transform:scaleX(0.8995);">H</span>
<span class="t" style="left:744.70px;top:201.14px;font-size:12px;line-height:17px;color:#3a3a3a;font-family:'Liberation Sans', sans-serif;transform:scaleX(0.9869);">I</span>
<span class="t" style="left:10.50px;top:221.64px;font-size:12px;line-height:17px;color:#444;font-family:'Liberation Sans', sans-serif;transform:scaleX(0.9720);">1</span>
<span class="t" style="left:10.50px;top:241.64px;font-size:12px;line-height:17px;color:#444;font-family:'Liberation Sans', sans-serif;transform:scaleX(0.9720);">2</span>
<span class="t" style="left:10.50px;top:261.64px;font-size:12px;line-height:17px;color:#444;font-family:'Liberation Sans', sans-serif;transform:scaleX(0.9720);">3</span>
<span class="t" style="left:10.50px;top:281.64px;font-size:12px;line-height:17px;color:#444;font-family:'Liberation Sans', sans-serif;transform:scaleX(0.9720);">4</span>
<span class="t" style="left:10.50px;top:301.64px;font-size:12px;line-height:17px;color:#217346;font-family:'Liberation Sans', sans-serif;transform:scaleX(0.9720);">5</span>
<span class="t" style="left:10.50px;top:321.64px;font-size:12px;line-height:17px;color:#444;font-family:'Liberation Sans', sans-serif;transform:scaleX(0.9720);">6</span>
<span class="t" style="left:10.50px;top:341.64px;font-size:12px;line-height:17px;color:#444;font-family:'Liberation Sans', sans-serif;transform:scaleX(0.9720);">7</span>
<span class="t" style="left:10.50px;top:361.64px;font-size:12px;line-height:17px;color:#444;font-family:'Liberation Sans', sans-serif;transform:scaleX(0.9720);">8</span>
<span class="t" style="left:28.90px;top:221.64px;font-size:12px;line-height:17px;color:#000;font-family:'Liberation Sans', sans-serif;transform:scaleX(1.1344);">Username</span>
<span class="t" style="left:99.50px;top:221.64px;font-size:12px;line-height:17px;color:#000;font-family:'Liberation Sans', sans-serif;transform:scaleX(1.1827);">Description</span>
<span class="t" style="left:176.70px;top:221.64px;font-size:12px;line-height:17px;color:#000;font-family:'Liberation Sans', sans-serif;transform:scaleX(1.1160);">Password</span>
<span class="t" style="left:242.70px;top:221.64px;font-size:12px;line-height:17px;color:#000;font-family:'Liberation Sans', sans-serif;transform:scaleX(1.1456);">User Interface password</span>
<span class="t" style="left:401.90px;top:221.64px;font-size:12px;line-height:17px;color:#000;font-family:'Liberation Sans', sans-serif;transform:scaleX(1.1396);">First name</span>
<span class="t" style="left:473.90px;top:221.64px;font-size:12px;line-height:17px;color:#000;font-family:'Liberation Sans', sans-serif;transform:scaleX(1.0919);">Last name</span>
<span class="t" style="left:542.80px;top:221.64px;font-size:12px;line-height:17px;color:#000;font-family:'Liberation Sans', sans-serif;transform:scaleX(1.1128);">Email</span>
<span class="t" style="left:584.20px;top:221.64px;font-size:12px;line-height:17px;color:#000;font-family:'Liberation Sans', sans-serif;transform:scaleX(1.1621);">Phone Number</span>
<span class="t" style="left:686.40px;top:221.64px;font-size:12px;line-height:17px;color:#000;font-family:'Liberation Sans', sans-serif;transform:scaleX(1.0760);">NFC Code Touch ID</span>
<span class="t" style="left:28.90px;top:241.64px;font-size:12px;line-height:17px;color:#000;font-family:'Liberation Sans', sans-serif;transform:scaleX(1.1348);">Simon</span>
<span class="t" style="left:177.30px;top:241.64px;font-size:12px;line-height:17px;color:#000;font-family:'Liberation Sans', sans-serif;transform:scaleX(1.0908);">1fdKJ8h_2</span>
<span class="t" style="left:242.70px;top:241.64px;font-size:12px;line-height:17px;color:#000;font-family:'Liberation Sans', sans-serif;transform:scaleX(1.2117);">showit2me</span>
<span class="t" style="left:401.90px;top:241.64px;font-size:12px;line-height:17px;color:#000;font-family:'Liberation Sans', sans-serif;transform:scaleX(1.1348);">Simon</span>
<span class="t" style="left:473.90px;top:241.64px;font-size:12px;line-height:17px;color:#000;font-family:'Liberation Sans', sans-serif;transform:scaleX(1.1589);">Garfunkel</span>
<span class="t" style="left:584.20px;top:241.64px;font-size:12px;line-height:17px;color:#000;font-family:'Liberation Sans', sans-serif;transform:scaleX(1.0543);">081547115</span>
<span class="t" style="left:28.90px;top:261.64px;font-size:12px;line-height:17px;color:#000;font-family:'Liberation Sans', sans-serif;transform:scaleX(1.2309);">William</span>
<span class="t" style="left:176.70px;top:261.64px;font-size:12px;line-height:17px;color:#000;font-family:'Liberation Sans', sans-serif;transform:scaleX(1.0759);">s8easVQ9</span>
<span class="t" style="left:401.90px;top:261.64px;font-size:12px;line-height:17px;color:#000;font-family:'Liberation Sans', sans-serif;transform:scaleX(1.2386);">William</span>
<span class="t" style="left:474.20px;top:261.64px;font-size:12px;line-height:17px;color:#000;font-family:'Liberation Sans', sans-serif;transform:scaleX(1.1172);">Riker</span>
<span class="t" style="left:584.20px;top:261.64px;font-size:12px;line-height:17px;color:#000;font-family:'Liberation Sans', sans-serif;transform:scaleX(1.0386);">065424864</span>
<span class="t" style="left:28.90px;top:281.64px;font-size:12px;line-height:17px;color:#000;font-family:'Liberation Sans', sans-serif;transform:scaleX(1.1258);">Debra</span>
<span class="t" style="left:177.30px;top:281.64px;font-size:12px;line-height:17px;color:#000;font-family:'Liberation Sans', sans-serif;transform:scaleX(1.0757);">55pRNyBv</span>
<span class="t" style="left:401.90px;top:281.64px;font-size:12px;line-height:17px;color:#000;font-family:'Liberation Sans', sans-serif;transform:scaleX(1.1350);">Debra</span>
<span class="t" style="left:474.20px;top:281.64px;font-size:12px;line-height:17px;color:#000;font-family:'Liberation Sans', sans-serif;transform:scaleX(1.1379);">Morgan</span>
<span class="t" style="left:584.20px;top:281.64px;font-size:12px;line-height:17px;color:#000;font-family:'Liberation Sans', sans-serif;transform:scaleX(1.0704);">051147117</span>
<span class="t" style="left:28.90px;top:301.64px;font-size:12px;line-height:17px;color:#000;font-family:'Liberation Sans', sans-serif;transform:scaleX(1.0800);">User 004</span>
<span class="t" style="left:28.90px;top:321.64px;font-size:12px;line-height:17px;color:#000;font-family:'Liberation Sans', sans-serif;transform:scaleX(1.0800);">User 005</span>
<span class="t" style="left:28.90px;top:341.64px;font-size:12px;line-height:17px;color:#000;font-family:'Liberation Sans', sans-serif;transform:scaleX(1.0800);">User 006</span>
<span class="t" style="left:28.90px;top:361.64px;font-size:12px;line-height:17px;color:#000;font-family:'Liberation Sans', sans-serif;transform:scaleX(1.0800);">User 007</span>
<span class="t" style="left:113.30px;top:385.74px;font-size:12px;line-height:17px;color:#217346;font-family:'Liberation Sans', sans-serif;font-weight:bold;transform:scaleX(1.1275);">Template</span>
<span class="t" style="left:7.70px;top:410.54px;font-size:12px;line-height:17px;color:#444;font-family:'Liberation Sans', sans-serif;transform:scaleX(0.9168);">Ready</span>
<span class="t" style="left:779.80px;top:410.34px;font-size:12px;line-height:17px;color:#444;font-family:'Liberation Sans', sans-serif;transform:scaleX(0.8815);">100 %</span>

</body></html>
